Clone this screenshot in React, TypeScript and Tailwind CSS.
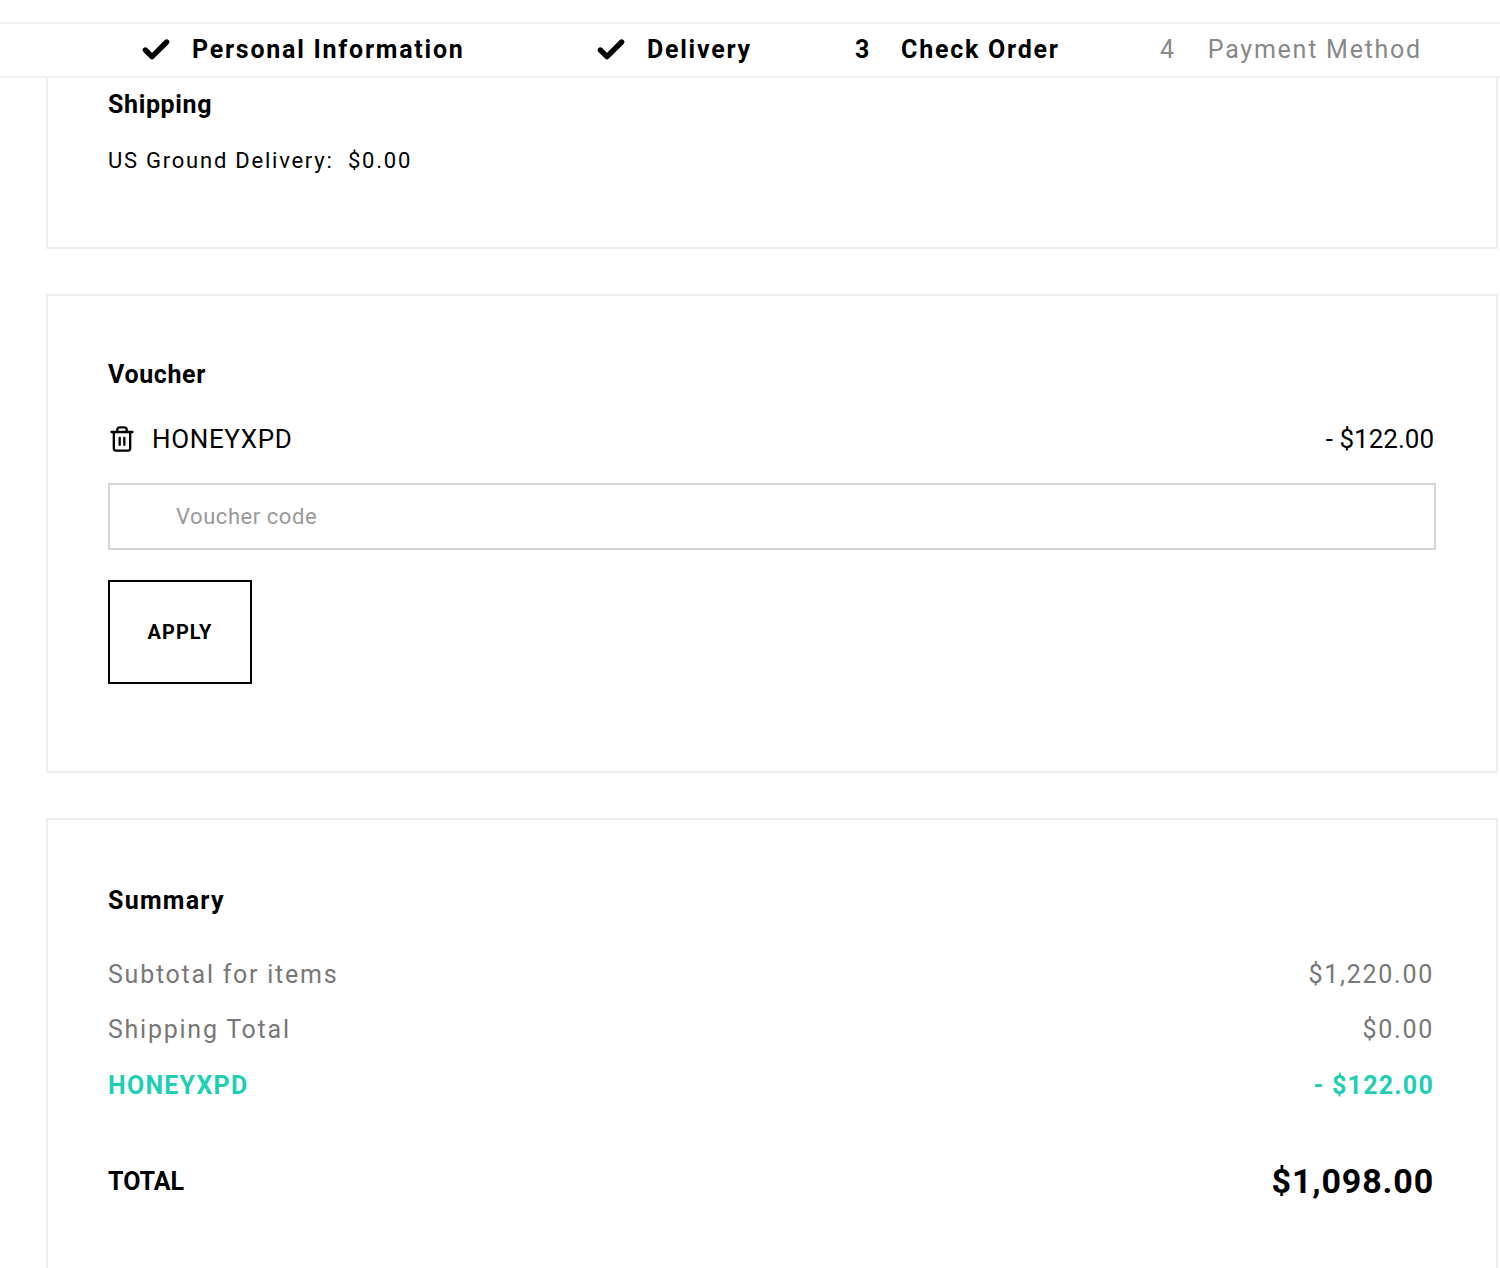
import { Check, Trash2 } from "lucide-react";

const font = { fontFamily: "Roboto, 'Liberation Sans', sans-serif" };

export default function App() {
  return (
    <div className="w-[1500px] h-[1268px] overflow-hidden bg-white text-black" style={font}>
      <div className="h-[22px]" />
      <div className="h-[56px] border-y-2 border-[#f0f0f0] flex items-center text-[25px] tracking-[0.07em] pl-[140px]">
        <div className="w-[455px] flex items-center gap-[20px] font-bold">
          <Check size={32} strokeWidth={4} />
          <span>Personal Information</span>
        </div>
        <div className="w-[260px] flex items-center gap-[20px] font-bold">
          <Check size={32} strokeWidth={4} />
          <span>Delivery</span>
        </div>
        <div className="w-[305px] flex items-center gap-[30px] font-bold">
          <span>3</span>
          <span>Check Order</span>
        </div>
        <div className="flex items-center gap-[32px] text-[#888]">
          <span>4</span>
          <span>Payment Method</span>
        </div>
      </div>

      <div className="ml-[46px] mr-[2px]">
        <div className="border-2 border-t-0 border-[#eeeeee] h-[171px] px-[60px] pt-[8px]">
          <div className="text-[25px] font-bold tracking-wide">Shipping</div>
          <div className="text-[22px] mt-[20px] tracking-[0.08em]">US Ground Delivery:&nbsp; $0.00</div>
        </div>

        <div className="border-2 border-[#eeeeee] mt-[45px] h-[479px] px-[60px] pt-[60px]">
          <div className="text-[25px] font-bold tracking-wide">Voucher</div>
          <div className="flex items-center justify-between mt-[26px] text-[26px] pr-[2px]">
            <div className="flex items-center gap-4">
              <Trash2 size={28} strokeWidth={2} />
              <span className="tracking-wide">HONEYXPD</span>
            </div>
            <span>- $122.00</span>
          </div>
          <div className="mt-[24px] h-[67px] border-2 border-[#d4d4d4] flex items-center pl-[66px] text-[22px] text-[#999] tracking-wide">
            Voucher code
          </div>
          <div className="mt-[30px] w-[144px] h-[104px] border-2 border-black flex items-center justify-center text-[20px] font-bold tracking-wider">
            APPLY
          </div>
        </div>

        <div className="border-2 border-b-0 border-[#eeeeee] mt-[45px] h-[460px] px-[60px] pt-[62px]">
          <div className="text-[25px] font-bold tracking-wider">Summary</div>
          <div className="mt-[36px] flex justify-between text-[25px] text-[#777] tracking-[0.07em] pr-[2px]">
            <span>Subtotal for items</span>
            <span>$1,220.00</span>
          </div>
          <div className="mt-[18px] flex justify-between text-[25px] text-[#777] tracking-[0.07em] pr-[2px]">
            <span>Shipping Total</span>
            <span>$0.00</span>
          </div>
          <div className="mt-[18px] flex justify-between text-[25px] font-bold text-[#1ecfb4] tracking-[0.05em] pr-[2px]">
            <span>HONEYXPD</span>
            <span>- $122.00</span>
          </div>
          <div className="mt-[52px] flex justify-between items-center pr-[2px]">
            <span className="text-[25px] font-bold">TOTAL</span>
            <span className="text-[34px] font-bold tracking-wide">$1,098.00</span>
          </div>
        </div>
      </div>
    </div>
  );
}
